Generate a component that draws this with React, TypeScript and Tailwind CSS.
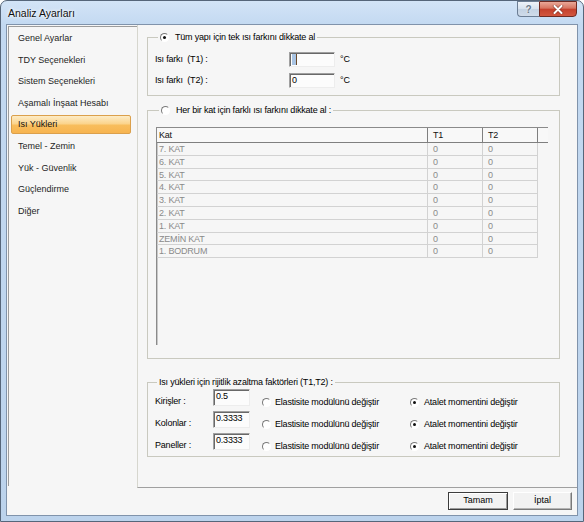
import React from "react";

const items = [
  "Genel Ayarlar",
  "TDY Seçenekleri",
  "Sistem Seçenekleri",
  "Aşamalı İnşaat Hesabı",
  "Isı Yükleri",
  "Temel - Zemin",
  "Yük - Güvenlik",
  "Güçlendirme",
  "Diğer",
];

const floors = ["7. KAT", "6. KAT", "5. KAT", "4. KAT", "3. KAT", "2. KAT", "1. KAT", "ZEMİN KAT", "1. BODRUM"];

function Radio({ checked }: { checked?: boolean }) {
  return (
    <span className="relative block w-[9px] h-[9px] shrink-0 rounded-full border border-t-[#7a7a7a] border-l-[#7a7a7a] border-b-[#ffffff] border-r-[#ffffff] bg-[#ffffff]">
      {checked && <span className="absolute left-[2px] top-[2px] w-[3px] h-[3px] rounded-full bg-[#111111]" />}
    </span>
  );
}

function Field({ value, w, h, caret }: { value?: string; w: string; h: string; caret?: boolean }) {
  return (
    <div
      className={`${w} ${h} shrink-0 flex items-start pl-[2px] pt-[1px] border border-t-[#a0a0a0] border-l-[#a0a0a0] border-b-[#ededed] border-r-[#ededed] bg-[#fcfcfc] shadow-[inset_1px_1px_0_#696969] text-[9px] leading-[11px]`}
    >
      {caret ? (
        <span className="flex items-start h-[11px]">
          <span className="w-[4px] h-[11px] bg-[#a9c4e3]" />
          <span className="w-[1px] h-[11px] bg-[#6b4a2a]" />
        </span>
      ) : (
        <span>{value}</span>
      )}
    </div>
  );
}

function Group({ legend, children, className, legendClass }: { legend: React.ReactNode; children: React.ReactNode; className?: string; legendClass?: string }) {
  return (
    <fieldset className={`border border-[#c9c9bf] ${className ?? ""}`}>
      <legend className={`flex items-center h-[12px] px-[2px] leading-[12px] ${legendClass ?? ""}`}>{legend}</legend>
      {children}
    </fieldset>
  );
}

export default function App() {
  return (
    <div className="w-[584px] h-[522px] flex flex-col overflow-hidden rounded-t-[7px] border border-[#56667a] bg-[linear-gradient(180deg,#d3e4f7_0px,#c3d9f1_24px,#bcd3ec_100%)] font-['Liberation_Sans',Arial,sans-serif] text-black select-none">
      {/* title bar */}
      <div className="h-[23px] shrink-0 flex justify-between pl-[7px] pr-[6px]">
        <div className="self-center text-[10.5px] leading-[12px] text-[#101010] [text-shadow:0_0_5px_#ffffff,0_0_3px_#ffffff]">
          Analiz Ayarları
        </div>
        <div className="flex h-[16px]">
          <div className="w-[22px] h-[16px] flex items-center justify-center rounded-bl-[4px] border border-[#6c7e94] border-r-0 bg-[linear-gradient(180deg,#eef3f9_0%,#d6e1ee_50%,#c3d2e3_51%,#d0dcea_100%)] text-[10px] font-bold text-[#6b7a8a] [text-shadow:0_0_2px_#ffffff]">
            ?
          </div>
          <div className="w-[38px] h-[16px] flex items-center justify-center rounded-br-[4px] border border-[#6e2a22] bg-[linear-gradient(180deg,#e9a898_0%,#d6735f_45%,#c4402c_50%,#d2563f_100%)]">
            <svg width="12" height="9" viewBox="0 0 12 9">
              <path d="M2.5 1 L9.5 8 M9.5 1 L2.5 8" stroke="#5a1d16" strokeWidth="3.4" strokeLinecap="round" opacity="0.55" />
              <path d="M2.5 1 L9.5 8 M9.5 1 L2.5 8" stroke="#ffffff" strokeWidth="2" strokeLinecap="round" />
            </svg>
          </div>
        </div>
      </div>

      {/* client area */}
      <div className="mx-[5px] mb-[5px] flex-1 flex flex-col border border-[#8093ab] bg-[#f6f6f6]">
        <div className="h-[463px] shrink-0 flex">
          {/* left list */}
          <div className="ml-[1px] mt-[1px] mb-[2px] w-[129px] shrink-0 border-t border-l border-[#9c9c9c] pt-[2px] flex flex-col gap-[2.6px]">
            {items.map((it, i) => (
              <div
                key={it}
                className={`ml-[2px] w-[120px] h-[19px] shrink-0 flex items-center pl-[6px] rounded-[2px] border text-[9px] leading-[11px] ${
                  i === 4
                    ? "border-[#dba04c] bg-[linear-gradient(180deg,#fdecc6_0%,#fbd48d_45%,#f8bd5c_55%,#f7b450_100%)] text-[#111111]"
                    : "border-transparent text-[#1e1e1e]"
                }`}
              >
                {it}
              </div>
            ))}
          </div>

          {/* right panel */}
          <div className="flex-1 flex flex-col border-l border-b border-l-[#d6d6ce] border-b-[#a0a0a0] pt-[6px] pl-[9px] pr-[17px] text-[9px] tracking-[-0.2px]">
            {/* group 1 */}
            <Group
              className="px-[7px] pb-[7px]"
              legendClass="ml-[3px] gap-[6px]"
              legend={
                <>
                  <Radio checked />
                  <span>Tüm yapı için tek ısı farkını dikkate al</span>
                </>
              }
            >
              <div className="mt-[9px] flex items-center h-[15px]">
                <span className="w-[134px]">Isı farkı&nbsp; (T1) :</span>
                <Field w="w-[46px]" h="h-[15px]" caret />
                <span className="ml-[5px]">°C</span>
              </div>
              <div className="mt-[6px] flex items-center h-[15px]">
                <span className="w-[134px]">Isı farkı&nbsp; (T2) :</span>
                <Field w="w-[46px]" h="h-[15px]" value="0" />
                <span className="ml-[5px]">°C</span>
              </div>
            </Group>

            {/* group 2 */}
            <Group
              className="mt-[8px] px-[8px] pb-[13px]"
              legendClass="ml-[3px] gap-[6px]"
              legend={
                <>
                  <Radio />
                  <span>Her bir kat için farklı ısı farkını dikkate al :</span>
                </>
              }
            >
              <div className="mt-[11px] h-[218px] w-[392px] border-l border-t border-l-[#8a8a8a] border-t-[#8a8a8a] shadow-[inset_1px_1px_0_#c8c8c8]">
                <div className="flex h-[15px] border-b border-[#7f7f7f] bg-[#f8f8f8] text-[#111111]">
                  <div className="w-[271px] border-r border-[#7f7f7f] pl-[2px] leading-[14px]">Kat</div>
                  <div className="w-[55px] border-r border-[#7f7f7f] pl-[5px] leading-[14px]">T1</div>
                  <div className="w-[55px] border-r border-[#7f7f7f] pl-[5px] leading-[14px]">T2</div>
                  <div className="flex-1" />
                </div>
                {floors.map((f) => (
                  <div key={f} className="flex h-[12.8px] text-[#8a8a8a]">
                    <div className="w-[271px] border-r border-b border-[#d2d2d2] pl-[2px] leading-[12px]">{f}</div>
                    <div className="w-[55px] border-r border-b border-[#d2d2d2] pl-[5px] leading-[12px]">0</div>
                    <div className="w-[55px] border-r border-b border-[#d2d2d2] pl-[5px] leading-[12px]">0</div>
                  </div>
                ))}
              </div>
            </Group>

            {/* group 3 */}
            <Group
              className="mt-[17px] px-[7px] pb-[1px]"
              legendClass="ml-[2px]"
              legend={<span>Isı yükleri için rijitlik azaltma faktörleri (T1,T2) :</span>}
            >
              {["Kirişler :", "Kolonlar :", "Paneller :"].map((lab, i) => (
                <div key={lab} className={`flex items-start h-[22px] ${i === 0 ? "mt-[1px]" : ""}`}>
                  <span className="w-[58px] mt-[6px] leading-[12px]">{lab}</span>
                  <Field w="w-[37px]" h="h-[17px]" value={i === 0 ? "0.5" : "0.3333"} />
                  <span className="ml-[12px] w-[148px] mt-[7px] flex items-center gap-[4px] leading-[12px]">
                    <Radio />
                    <span>Elastisite modülünü değiştir</span>
                  </span>
                  <span className="mt-[7px] flex items-center gap-[5px] leading-[12px]">
                    <Radio checked />
                    <span>Atalet momentini değiştir</span>
                  </span>
                </div>
              ))}
            </Group>
          </div>
        </div>

        {/* buttons */}
        <div className="flex-1 flex justify-end items-start pt-[4px] pr-[5px] gap-[5px] text-[9px]">
          <div className="w-[60px] h-[18px] flex items-center justify-center border border-[#3c3c3c] bg-[#f2f2f2] shadow-[inset_1px_1px_0_#ffffff,inset_-1px_-1px_0_#9a9a9a]">
            Tamam
          </div>
          <div className="w-[59px] h-[18px] flex items-center justify-center border border-t-[#ffffff] border-l-[#ffffff] border-b-[#7a7a7a] border-r-[#7a7a7a] bg-[#f2f2f2] shadow-[inset_-1px_-1px_0_#b4b4b4]">
            İptal
          </div>
        </div>
      </div>
    </div>
  );
}
